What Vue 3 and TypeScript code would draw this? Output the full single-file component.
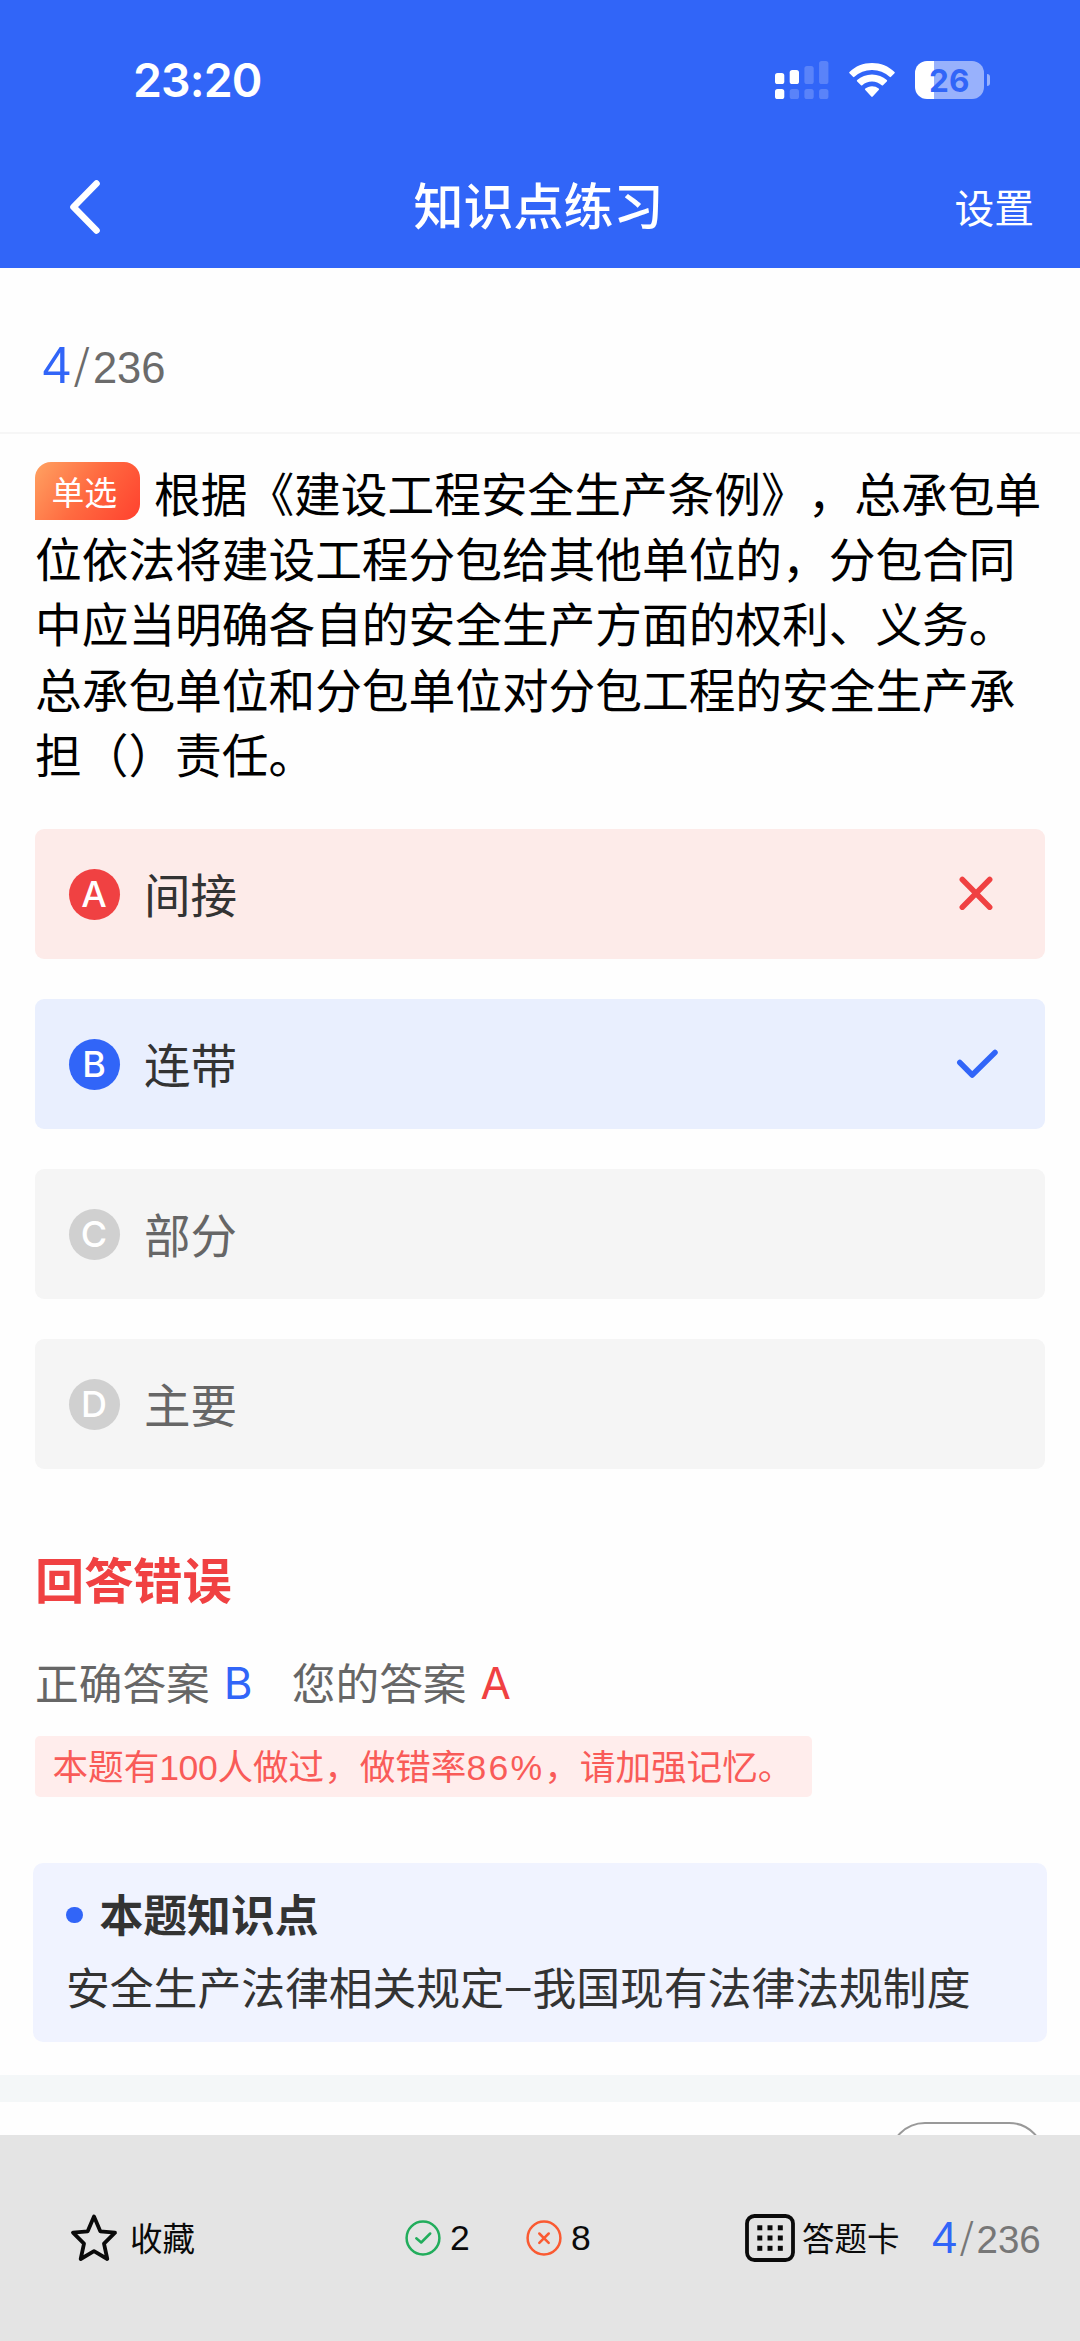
<script setup lang="ts">
type OptionState = 'wrong' | 'right' | 'idle'

interface Option {
  key: string
  label: string
  state: OptionState
}

const current = 4
const total = 236

const questionLines: string[] = [
  '根据《建设工程安全生产条例》，总承包单',
  '位依法将建设工程分包给其他单位的，分包合同',
  '中应当明确各自的安全生产方面的权利、义务。',
  '总承包单位和分包单位对分包工程的安全生产承',
  '担（）责任。',
]

const options: Option[] = [
  { key: 'A', label: '间接', state: 'wrong' },
  { key: 'B', label: '连带', state: 'right' },
  { key: 'C', label: '部分', state: 'idle' },
  { key: 'D', label: '主要', state: 'idle' },
]

const dots: number[] = [14.5, 24.7, 35]
</script>

<template>
  <div class="screen">
    <header class="header">
      <div class="status">
        <span class="clock">23:20</span>
        <div class="status-icons">
          <svg class="signal" width="54" height="38" viewBox="0 0 54 38" fill="#fff">
            <rect x="0" y="12" width="9.3" height="11" rx="2.6" />
            <rect x="14.7" y="9" width="9.3" height="14" rx="2.6" />
            <rect x="29.4" y="5" width="9.3" height="18" rx="2.6" opacity=".2" />
            <rect x="44.1" y="0" width="9.3" height="23" rx="2.6" opacity=".2" />
            <rect x="0" y="28" width="9.3" height="10" rx="2.6" />
            <rect x="14.7" y="28" width="9.3" height="10" rx="2.6" opacity=".2" />
            <rect x="29.4" y="28" width="9.3" height="10" rx="2.6" opacity=".2" />
            <rect x="44.1" y="28" width="9.3" height="10" rx="2.6" opacity=".2" />
          </svg>
          <svg class="wifi" width="46" height="38" viewBox="0 0 46 38" fill="#fff">
            <path d="M23 2C14.3 2 6.300 5.300.5 10.900a.9.9 0 0 0 0 1.300L4 15.800a1 1 0 0 0 1.400 0A25.500 25.500 0 0 1 23 8.900a25.500 25.500 0 0 1 17.600 6.900 1 1 0 0 0 1.400 0l3.500-3.600a.9.9 0 0 0 0-1.300C39.700 5.300 31.700 2 23 2Z" />
            <path d="M23 13.400c-5.700 0-10.900 2.200-14.800 5.700a.9.9 0 0 0 0 1.400l3.800 3.800a1 1 0 0 0 1.300 0A14.600 14.600 0 0 1 23 20.600c3.700 0 7.100 1.400 9.700 3.700a1 1 0 0 0 1.300 0l3.800-3.800a.9.9 0 0 0 0-1.400C33.900 15.600 28.700 13.400 23 13.400Z" />
            <path d="M23 25.200c-2.600 0-4.900.9-6.700 2.400a.9.9 0 0 0 0 1.400l6 6.600a1 1 0 0 0 1.400 0l6-6.600a.9.9 0 0 0 0-1.400A10.500 10.500 0 0 0 23 25.200Z" />
          </svg>
          <div class="battery"><span>26</span></div>
          <div class="battery-tip"></div>
        </div>
      </div>
      <nav class="nav">
        <svg class="back" width="40" height="60" viewBox="0 0 40 60" fill="none" stroke="#fff" stroke-width="6.6" stroke-linejoin="round" stroke-linecap="round">
          <path d="M31.500 7.500 8.500 31l23 23.500" />
        </svg>
        <h1>知识点练习</h1>
        <span class="settings">设置</span>
      </nav>
    </header>

    <main class="main">
      <div class="progress"><b>{{ current }}</b><s>/</s><span>{{ total }}</span></div>

      <section class="question">
        <div v-for="(line, i) in questionLines" :key="i" class="line">
          <span v-if="i === 0" class="badge">单选</span>{{ line }}
        </div>
      </section>

      <section class="options">
        <div v-for="o in options" :key="o.key" class="option" :class="o.state">
          <span class="key">{{ o.key }}</span>
          <span class="label">{{ o.label }}</span>
          <svg v-if="o.state === 'wrong'" class="mark" width="44" height="44" viewBox="0 0 44 44">
            <path d="M8.300 7.500 35.700 35.200M35.700 7.500 8.300 35.200" />
          </svg>
          <svg v-if="o.state === 'right'" class="mark" width="44" height="44" viewBox="0 0 44 44">
            <path d="M5.800 20.500 18.200 33 41 10.500" />
          </svg>
        </div>
      </section>

      <h2 class="verdict">回答错误</h2>
      <div class="answers">
        <span>正确答案</span><i class="right-key">B</i>
        <span class="yours">您的答案</span><i class="wrong-key">A</i>
      </div>
      <div class="stat">本题有<em class="people">100</em>人做过，做错率<em class="rate">86%</em>，请加强记忆。</div>

      <section class="knowledge">
        <h3>本题知识点</h3>
        <p>安全生产法律相关规定<span class="dash">–</span>我国现有法律法规制度</p>
      </section>

      <div class="band"></div>
      <div class="pill"></div>
    </main>

    <footer class="footer">
      <div class="fav">
        <svg width="50" height="52" viewBox="0 0 50 52" fill="none" stroke="#0a0a0a" stroke-width="3.800" stroke-linejoin="round">
          <path d="M25 4.500 31.300 19.300 46 20.700 35 31.600 38.300 47 25 39.200 11.700 47 15 31.600 4 20.700 18.700 19.300Z" />
        </svg>
        <span>收藏</span>
      </div>
      <div class="count ok">
        <svg width="36" height="36" viewBox="0 0 36 36" fill="none" stroke="#22ad5c" stroke-width="2.500" stroke-linecap="round" stroke-linejoin="round">
          <circle cx="18" cy="18" r="16.400" />
          <path d="M11.300 18.200 16.200 22.500 25.200 13.500" />
        </svg>
        <span>2</span>
      </div>
      <div class="count bad">
        <svg width="36" height="36" viewBox="0 0 36 36" fill="none" stroke="#fa5a32" stroke-width="2.500" stroke-linecap="round">
          <circle cx="18" cy="18" r="16.400" />
          <path d="M13.300 13.500 22.700 22.900M22.700 13.500 13.300 22.900" />
        </svg>
        <span>8</span>
      </div>
      <div class="card">
        <svg width="50" height="48" viewBox="0 0 50 48">
          <rect x="2" y="2" width="46" height="44" rx="7.500" fill="none" stroke="#0a0a0a" stroke-width="3.800" />
          <template v-for="y in dots" :key="y">
            <rect v-for="x in dots" :key="x" :x="x - 2.200" :y="y - 3.200" width="5" height="5" fill="#0a0a0a" />
          </template>
        </svg>
        <span>答题卡</span>
      </div>
      <div class="page"><b>{{ current }}</b><s>/</s><span>{{ total }}</span></div>
    </footer>
  </div>
</template>

<style>
body {
  margin: 0;
  background: #fefefe;
}
</style>

<style scoped>
.screen {
  width: 1080px;
  height: 2341px;
  display: flex;
  flex-direction: column;
  overflow: hidden;
  background: #fefefe;
  font-family: "Noto Sans CJK SC", "Liberation Sans", sans-serif;
  text-spacing-trim: space-all;
  white-space: nowrap;
  color: #000;
}
h1, h2, h3, p { margin: 0; }
i, em { font-style: normal; }
s { text-decoration: none; }
svg { display: block; flex: none; }

.header {
  height: 268px;
  flex: none;
  background: #3165f8;
  color: #fff;
}
.status {
  height: 160px;
  box-sizing: border-box;
  padding: 61px 90px 0 133px;
  display: flex;
  justify-content: space-between;
  align-items: flex-start;
}
.clock {
  font: 600 46.500px/39px Inter, sans-serif;
  letter-spacing: -.9px;
}
.status-icons { display: flex; }
.wifi { margin-left: 19.700px; }
.battery {
  width: 68.500px;
  height: 38px;
  margin-left: 20.300px;
  border-radius: 12px;
  background: linear-gradient(90deg, #fff 18.600px, #98b1fc 18.600px);
  color: #3165f8;
  font: 700 31.500px/39px Inter, sans-serif;
  text-align: center;
}
.battery-tip {
  width: 3.500px;
  height: 12px;
  margin: 13px 0 0 3px;
  border-radius: 0 6px 6px 0;
  background: #98b1fc;
}
.nav {
  height: 60px;
  margin-top: 16px;
  padding: 0 46px 0 65px;
  display: grid;
  grid-template-columns: 79px 1fr 101px;
  align-items: center;
}
.nav h1 {
  height: 60px;
  font-size: 50px;
  line-height: 55px;
  font-weight: 500;
  text-align: center;
}
.settings {
  font-size: 39.800px;
  line-height: 60px;
  text-align: right;
}

.main {
  height: 1867px;
  flex: none;
  overflow: hidden;
  padding: 0 35px;
}
.progress {
  height: 164px;
  margin: 0 -35px;
  padding: 0 42.500px;
  border-bottom: 2px solid #f6f6f6;
  display: flex;
  align-items: baseline;
  font: 43.500px/194px "Liberation Sans", sans-serif;
  color: #6b6b6b;
}
.progress b {
  font-size: 51px;
  font-weight: 400;
  color: #3165f8;
}
.progress s {
  width: 22px;
  text-align: center;
  font-family: "Noto Sans CJK SC", sans-serif;
  font-size: 41px;
  font-weight: 400;
  transform: translateY(-3.500px);
}
.question { padding-top: 24.800px; }
.line {
  height: 65.300px;
  font-size: 46.700px;
  line-height: 65.300px;
  display: flex;
  align-items: center;
}
.badge {
  width: 104.500px;
  height: 58px;
  box-sizing: border-box;
  padding-left: 16.500px;
  margin-right: 14.500px;
  border-radius: 16px 16px 16px 0;
  background: linear-gradient(125deg, #ffa262 0%, #ff6a40 50%, #ff4530 95%);
  color: #fff;
  font-size: 32.800px;
  line-height: 58px;
}
.options {
  margin-top: 43.700px;
  display: flex;
  flex-direction: column;
  gap: 39.500px;
}
.option {
  height: 130.500px;
  box-sizing: border-box;
  padding: 0 47px 0 33.500px;
  border-radius: 9px;
  display: flex;
  align-items: center;
  font-size: 46.500px;
  color: #333;
  background: #f5f5f5;
}
.option.wrong { background: #fdebe9; }
.option.right { background: #e9effe; }
.option.idle { color: #666; }
.key {
  width: 51px;
  height: 51px;
  border-radius: 50%;
  background: #d0d0d0;
  color: #fff;
  font: 500 36px/51px Inter, sans-serif;
  text-align: center;
}
.wrong .key { background: #f04142; }
.right .key { background: #3165f8; }
.label {
  height: 65px;
  margin: 0 0 2px 24.500px;
  line-height: 63px;
}
.mark {
  margin-left: auto;
  fill: none;
  stroke-width: 5.500px;
  stroke-linecap: round;
  stroke-linejoin: round;
}
.wrong .mark { stroke: #f04142; }
.right .mark { stroke: #3165f8; }

.verdict {
  margin-top: 79px;
  height: 60px;
  font-size: 49.200px;
  line-height: 60px;
  font-weight: 700;
  color: #f04142;
}
.answers {
  margin-top: 42.500px;
  height: 60px;
  display: flex;
  font-size: 43.700px;
  line-height: 60px;
  color: #666;
}
.answers i {
  font: 44px/64px Inter, sans-serif;
  width: 30px;
  margin-left: 14px;
}
.right-key { color: #3165f8; }
.wrong-key { color: #f04142; }
.yours { margin-left: 38px; }
.stat {
  width: 777px;
  height: 60.700px;
  box-sizing: border-box;
  margin-top: 25.500px;
  padding-left: 17.500px;
  border-radius: 5px;
  background: #ffedec;
  color: #f95b58;
  font-size: 35.600px;
  line-height: 57px;
}
.stat em { font-family: "Liberation Sans", sans-serif; line-height: 1; }
.people { letter-spacing: -.4px; }
.rate { letter-spacing: 2.200px; }
.knowledge {
  height: 178.500px;
  box-sizing: border-box;
  margin: 66.300px -1.600px 0;
  padding: 20px 32.600px 0;
  border-radius: 10px;
  background: #f0f3ff;
  color: #333;
}
.knowledge h3 {
  height: 60px;
  display: flex;
  align-items: center;
  gap: 17px;
  font-size: 43.800px;
  line-height: 60px;
  font-weight: 700;
}
.knowledge h3::before {
  content: "";
  width: 16.500px;
  height: 16.500px;
  margin-top: 3px;
  border-radius: 50%;
  background: #3165f8;
}
.knowledge p {
  margin-top: 13px;
  height: 60px;
  display: flex;
  font-size: 43.800px;
  line-height: 60px;
}
.dash {
  width: 28.500px;
  text-align: center;
  font-family: "Liberation Sans", sans-serif;
}
.band {
  height: 26.700px;
  margin: 33.500px -35px 0;
  background: #f4f7f8;
}
.pill {
  width: 156px;
  height: 72px;
  box-sizing: border-box;
  margin: 20.300px 0 0 auto;
  border: 2.500px solid #999;
  border-radius: 36px;
}

.footer {
  height: 206px;
  flex: none;
  box-sizing: border-box;
  padding: 78px 30px 0 69px;
  display: flex;
  align-items: flex-start;
  background: #e4e4e4;
  color: #0a0a0a;
  font-size: 32.500px;
  line-height: 50px;
}
.footer > div {
  height: 50px;
  display: flex;
  align-items: center;
}
.fav { width: 336px; }
.fav span, .card span { height: 50px; line-height: 48px; }
.fav span { margin-left: 11px; }
.count { width: 121px; font: 35.500px/50px "Liberation Sans", sans-serif; }
.count span { margin-left: 9px; }
.card { width: 187px; margin-left: 98px; }
.card span { margin-left: 7px; }
.footer .page {
  align-items: baseline;
  font: 38.500px/49px "Liberation Sans", sans-serif;
  color: #777;
}
.page b {
  font-size: 45px;
  font-weight: 400;
  color: #3165f8;
}
.page s {
  width: 19.500px;
  text-align: center;
  font-family: "Noto Sans CJK SC", sans-serif;
  font-size: 36px;
  font-weight: 400;
  transform: translateY(-3px);
}
</style>
